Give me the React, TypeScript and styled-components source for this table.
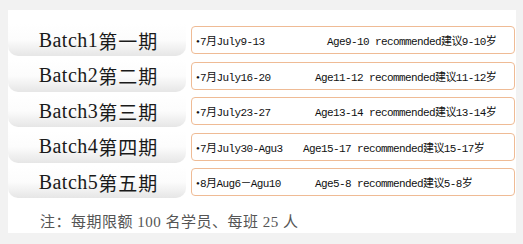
import React from 'react';
import styled, { createGlobalStyle } from 'styled-components';

interface batchI {
  latin: string
  han: string
  date: string
  age: string
  ageAt: number
}

const batches: batchI[] = [
  { latin: 'Batch1', han: '第一期', date: '7月July9-13', age: 'Age9-10 recommended建议9-10岁', ageAt: 131 },
  { latin: 'Batch2', han: '第二期', date: '7月July16-20', age: 'Age11-12 recommended建议11-12岁', ageAt: 119 },
  { latin: 'Batch3', han: '第三期', date: '7月July23-27', age: 'Age13-14 recommended建议13-14岁', ageAt: 119 },
  { latin: 'Batch4', han: '第四期', date: '7月July30-Agu3', age: 'Age15-17 recommended建议15-17岁', ageAt: 107 },
  { latin: 'Batch5', han: '第五期', date: '8月Aug6－Agu10', age: 'Age5-8 recommended建议5-8岁', ageAt: 119 },
]

const App = () => {
  return (
    <>
      <GlobalStyle />
      <Panel>
        <BatchList>
          {batches.map(b => (
            <BatchRow key={b.latin}>
              <BatchLabel>
                <LabelLatin>{b.latin}</LabelLatin>
                <LabelHan>{b.han}</LabelHan>
              </BatchLabel>
              <InfoBox>
                <DateCell $width={b.ageAt}>
                  <Bullet>•</Bullet>
                  {b.date}
                </DateCell>
                <AgeCell>{b.age}</AgeCell>
              </InfoBox>
            </BatchRow>
          ))}
        </BatchList>
        <Note>注：每期限额 100 名学员、每班 25 人</Note>
      </Panel>
    </>
  );
};

export default App;

const GlobalStyle = createGlobalStyle`
  html, body {
    margin: 0;
    padding: 0;
    background-color: #f2f2f2;
  }
`

const Panel = styled.div`
  width: 508px;
  height: 223px;
  margin: 10px 0 0 8px;
  padding-top: 14px;
  box-sizing: border-box;
  background-color: #ffffff;
  display: flex;
  flex-direction: column;
`

const BatchList = styled.div`
  display: flex;
  flex-direction: column;
  gap: 3.5px;
`

const BatchRow = styled.div`
  display: flex;
  align-items: flex-start;
  height: 32px;
`

const BatchLabel = styled.div`
  width: 178px;
  height: 32px;
  display: flex;
  justify-content: center;
  align-items: center;
  padding-left: 3px;
  box-sizing: border-box;
  border-radius: 0 0 10px 10px;
  background: linear-gradient(to bottom, #ffffff 0%, #fcfcfc 50%, #e6e6e6 100%);
  color: #1a1a1a;
`

const LabelLatin = styled.span`
  font-family: "Liberation Serif", serif;
  font-size: 20px;
  letter-spacing: 0.5px;
`

const LabelHan = styled.span`
  font-family: "Noto Sans CJK SC", sans-serif;
  font-size: 19px;
  letter-spacing: 1px;
`

const InfoBox = styled.div`
  width: 324px;
  height: 28px;
  margin: 2px 0 0 5px;
  box-sizing: border-box;
  border: 1px solid #efbb95;
  border-radius: 4px;
  background-color: #ffffff;
  display: flex;
  align-items: center;
  padding-left: 4px;
  font-family: "Liberation Mono", "Noto Sans CJK SC", monospace;
  font-size: 11px;
  letter-spacing: -0.6px;
  color: #111111;
  white-space: nowrap;
`

const DateCell = styled.span<{ $width: number }>`
  width: ${p => p.$width}px;
  flex-shrink: 0;
`

const Bullet = styled.span`
  display: inline-block;
  width: 4px;
  font-family: "Liberation Serif", serif;
`

const AgeCell = styled.span``

const Note = styled.div`
  margin: 12px 0 0 32px;
  font-family: "Liberation Serif", "Noto Sans CJK SC", serif;
  font-size: 15px;
  color: #555555;
  letter-spacing: 0.5px;
`
